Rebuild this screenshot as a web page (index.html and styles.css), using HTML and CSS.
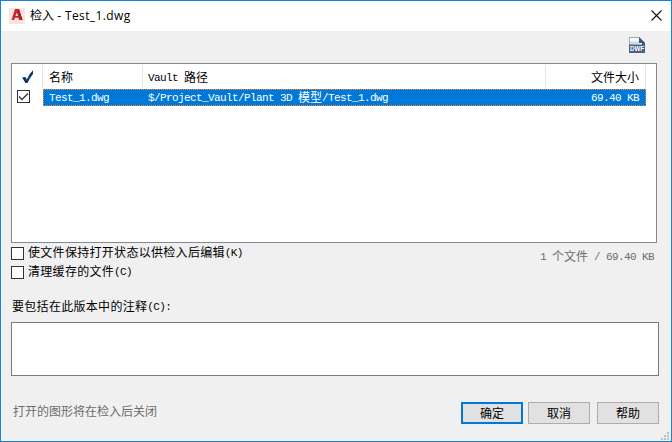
FILE: index.html
```html
<!DOCTYPE html>
<html lang="zh-CN">
<head>
<meta charset="utf-8">
<title>检入 - Test_1.dwg</title>
<link rel="stylesheet" href="styles.css">
</head>
<body>
<main class="window">
  <header class="titlebar">
    <svg class="app-icon" width="16" height="16" viewBox="0 0 16 16"><path fill="#f9e4e0" d="M0 0h16v16H0z"/><path fill="#c4262e" fill-rule="evenodd" d="M6 1h4l3.500 11H10L9.500 9.800H6L5 12H2.500zM7.700 4.500L6.500 8h2.600z"/><path fill="#a82029" d="M9 2l1-1 3.500 11H11z"/></svg>
    <h1 class="title">检入 <span class="filename">- Test_1.dwg</span></h1>
    <svg class="close" width="11" height="11" viewBox="0 0 11 11"><path d="M.5.5l10 10M10.500.5l-10 10" fill="none" stroke="#111" stroke-width="1.100"/></svg>
  </header>
  <div class="toolbar">
    <svg width="16" height="16" viewBox="0 0 16 16"><path d="M.5.5H10l5.500 5v10H.5z" fill="#f7f9fb" stroke="#a3a8b0"/><path d="M1 4.500h9v3H1z" fill="#d5dae1"/><path d="M10 0l6 6v2h-3V6h-3z" fill="#35547f"/><path d="M0 7.500h16V16H0z" fill="#4a6285"/><text class="dwf" x="8" y="14.300" text-anchor="middle" textLength="14" lengthAdjust="spacingAndGlyphs">DWF</text></svg>
  </div>
  <section class="list">
    <div class="row head">
      <div class="cell check"><svg width="12" height="14" viewBox="0 0 12 14"><path d="M0 7.500l3.500-.5 1.300 2.500Q7 4 11 .3V4Q7.500 8 5.500 13H3.500z" fill="#0b3566"/></svg></div>
      <div class="cell name">名称</div>
      <div class="cell path"><span class="latin">Vault </span>路径</div>
      <div class="cell size">文件大小</div>
    </div>
    <div class="row item">
      <div class="check"><span class="box"><svg width="11" height="11" viewBox="0 0 11 11"><path d="M1 5.500l3 3L10 2.500" fill="none" stroke="#333" stroke-width="1.300"/></svg></span></div>
      <div class="selected">
        <div class="name"><span class="latin">Test_1.dwg</span></div>
        <div class="path"><span class="latin">$/Project_Vault/Plant 3D </span>模型<span class="latin">/Test_1.dwg</span></div>
        <div class="size"><span class="latin">69.40 KB</span></div>
      </div>
    </div>
  </section>
  <section class="options">
    <div class="choices">
      <label class="choice"><span class="box"></span><span class="caption"><span class="wide">使文件保持打开状态以供检入后编辑</span><span class="latin">(K)</span></span></label>
      <label class="choice"><span class="box"></span><span class="caption"><span class="wide">清理缓存的文件</span><span class="latin">(C)</span></span></label>
    </div>
    <div class="summary"><span class="latin">1 </span>个文件<span class="latin"> / 69.40 KB</span></div>
  </section>
  <div class="label"><span class="wide">要包括在此版本中的注释</span><span class="latin">(C):</span></div>
  <div class="comment"></div>
  <footer class="footer">
    <p class="status">打开的图形将在检入后关闭</p>
    <button class="btn primary">确定</button>
    <button class="btn">取消</button>
    <button class="btn help">帮助</button>
  </footer>
  <svg class="grip" width="8" height="8" viewBox="0 0 8 8"><path fill="#bfbfbf" d="M6 0h2v2H6zM3 3h2v2H3zM6 3h2v2H6zM0 6h2v2H0zM3 6h2v2H3zM6 6h2v2H6z"/></svg>
</main>
</body>
</html>
```
FILE: styles.css
```css
* { box-sizing: border-box; }
body { margin: 0; }
svg { display: block; flex: none; }

.window {
  position: relative;
  display: flex;
  flex-direction: column;
  width: 672px;
  height: 442px;
  border: 1px solid #1883d7;
  background: #f0f0f0;
  color: #000;
  font: 12px/16px "Noto Sans CJK SC", sans-serif;
  overflow: hidden;
}
.latin {
  font-family: "Liberation Mono", monospace;
  font-size: 11px;
  line-height: 1;
  letter-spacing: -0.6px;
  vertical-align: 1px;
  white-space: pre;
}
.wide { letter-spacing: 0.3px; }

.titlebar {
  display: flex;
  align-items: center;
  height: 30px;
  padding: 0 9px 0 8px;
  background: #fff;
}
.title {
  flex: 1;
  margin: 0 0 0 5px;
  font: 12px/18px "Open Sans", "Noto Sans CJK SC", sans-serif;
}
.filename { letter-spacing: 0.4px; }
.close { margin-top: -1px; }

.toolbar {
  display: flex;
  justify-content: flex-end;
  height: 32px;
  padding: 6px 26px 0 0;
}
.dwf {
  fill: #fff;
  font: bold 7px "Liberation Sans", sans-serif;
}

.list {
  width: 646px;
  height: 180px;
  margin-left: 10px;
  border: 1px solid #828790;
  background: #fff;
}
.row { display: flex; }
.head { height: 25px; padding-top: 1px; }
.cell {
  border-right: 1px solid #e5e5e5;
  line-height: 23px;
}
.check { width: 31px; flex: none; }
.head .check { padding: 5px 0 0 10px; }
.name { width: 100px; padding-left: 6px; }
.path { width: 403px; padding-left: 5px; }
.size { width: 100px; padding-right: 6px; text-align: right; }

.item { height: 18px; }
.item .check { padding: 1px 0 0 5px; }
.selected {
  display: flex;
  width: 603px;
  height: 17px;
  border: 1px dotted #ff8728;
  background: #0078d7;
  color: #fff;
  line-height: 14px;
}
.selected .name { width: 99px; padding-left: 5px; }
.selected .size { width: 99px; padding-right: 6px; }
.box {
  display: block;
  flex: none;
  width: 13px;
  height: 13px;
  border: 1px solid #333;
  background: #fff;
}

.options {
  display: flex;
  justify-content: space-between;
  height: 54px;
  padding: 1px 17px 0 10px;
}
.choice { display: flex; height: 19px; line-height: 16px; }
.choice .box { margin: 3px 4px 0 0; }
.summary { padding-top: 4px; color: #6d6d6d; }
.label { height: 25px; padding-left: 11px; line-height: 17px; }
.comment {
  width: 648px;
  height: 54px;
  margin-left: 10px;
  border: 1px solid #7a7a7a;
  background: #fff;
}

.footer {
  display: flex;
  padding: 26px 12px 0 12px;
}
.status { flex: 1; margin: 1px 0 0; color: #6d6d6d; }
.btn {
  width: 62px;
  height: 22px;
  margin: 0 0 0 5px;
  padding: 0;
  border: 1px solid #adadad;
  background: #e1e1e1;
  color: #000;
  font: inherit;
}
.primary { border: 2px solid #0078d7; }
.help { margin-left: 7px; }
.grip { position: absolute; right: 2px; bottom: 1px; }
```
